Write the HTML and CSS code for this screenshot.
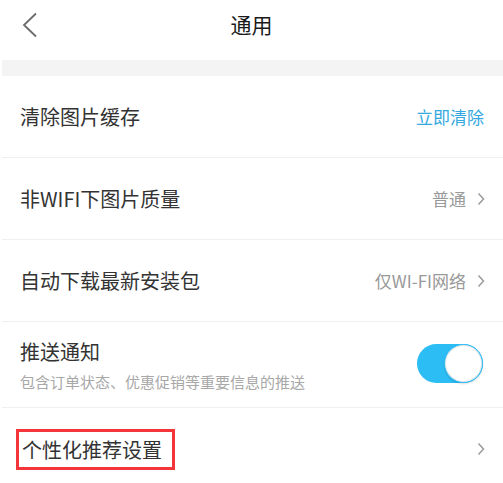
FILE: index.html
```html
<!DOCTYPE html>
<html lang="zh-CN">
<head>
<meta charset="utf-8">
<title>通用</title>
<link rel="stylesheet" href="styles.css">
</head>
<body>
<div class="page">
  <header class="header">
    <div class="back">
      <svg width="16" height="26" viewBox="0 0 16 26"><polyline points="14,1.5 2,13 14,24.5" fill="none" stroke="#6b6b6b" stroke-width="1.8" stroke-linejoin="miter"/></svg>
    </div>
    <div class="title">通用</div>
    <div></div>
  </header>
  <div class="band"></div>
  <div class="row">
    <div class="label">清除图片缓存</div>
    <div class="value link">立即清除</div>
  </div>
  <div class="row">
    <div class="label">非WIFI下图片质量</div>
    <div class="value">普通<svg class="chev" width="8" height="14" viewBox="0 0 8 14"><polyline points="1.5,1.5 6.5,7 1.5,12.5" fill="none" stroke="#9a9a9a" stroke-width="1.5"/></svg></div>
  </div>
  <div class="row">
    <div class="label">自动下载最新安装包</div>
    <div class="value">仅WI-FI网络<svg class="chev" width="8" height="14" viewBox="0 0 8 14"><polyline points="1.5,1.5 6.5,7 1.5,12.5" fill="none" stroke="#9a9a9a" stroke-width="1.5"/></svg></div>
  </div>
  <div class="row row-push">
    <div class="push-text">
      <div class="label">推送通知</div>
      <div class="sub">包含订单状态、优惠促销等重要信息的推送</div>
    </div>
    <div class="toggle"><span class="knob"></span></div>
  </div>
  <div class="row row-last">
    <div class="label"><span class="mark">个性化推荐设置</span></div>
    <div class="value"><svg class="chev" width="8" height="14" viewBox="0 0 8 14"><polyline points="1.5,1.5 6.5,7 1.5,12.5" fill="none" stroke="#9a9a9a" stroke-width="1.5"/></svg></div>
  </div>
</div>
</body>
</html>
```
FILE: styles.css
```css
* { box-sizing: border-box; }
html, body { margin: 0; padding: 0; background: #fff; }
body {
  font-family: "Noto Sans CJK SC", "Noto Sans", sans-serif;
  color: #333;
  width: 503px;
  height: 483px;
  overflow: hidden;
}
.page { display: flex; flex-direction: column; }
.header {
  height: 48px;
  margin-bottom: 12px;
  display: grid;
  grid-template-columns: 1fr auto 1fr;
  align-items: center;
}
.back { padding-left: 22px; display: flex; align-items: center; padding-top: 2px; }
.back svg { display: block; }
.title { font-size: 21px; color: #1a1a1a; line-height: 28px; }
.band { height: 16px; background: #f4f4f4; margin-left: 2px; }
.row {
  height: 82px;
  margin-left: 2px;
  padding: 0 18px 0 18px;
  display: flex;
  align-items: center;
  justify-content: space-between;
  border-bottom: 1px solid #efefef;
}
.label { font-size: 20px; line-height: 28px; color: #333; }
.value {
  font-size: 17px;
  color: #999;
  display: flex;
  align-items: center;
  line-height: 24px;
}
.value.link { color: #35a8e0; padding-right: 1px; }
.chev { display: block; margin-left: 11px; }
.row-push {
  height: 86px;
  align-items: flex-start;
  padding-top: 16px;
  padding-right: 20px;
}
.push-text { display: flex; flex-direction: column; gap: 4px; }
.sub { font-size: 15px; line-height: 24px; color: #a8a8a8; }
.toggle {
  position: relative;
  margin-top: 6px;
  width: 66px;
  height: 39px;
  border-radius: 20px;
  background: #2cbdf5;
}
.knob {
  position: absolute;
  right: 0;
  top: 0;
  width: 39px;
  height: 39px;
  border-radius: 50%;
  background: #fff;
  border: 1.5px solid #2cbdf5;
  box-shadow: inset 0 0 0 1px #e6e6e6, 0 1px 2px rgba(0,0,0,0.15);
}
.row-last { border-bottom: none; }
.mark {
  display: inline-block;
  margin-left: -4px;
  border: 3px solid #f4353a;
  padding: 0 10px 0 3px;
  line-height: 35px;
}
```
